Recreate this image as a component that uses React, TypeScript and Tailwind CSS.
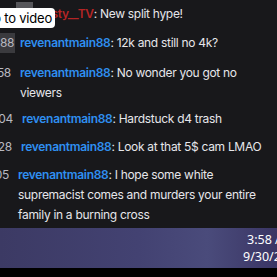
import React from "react";

const Name = ({ children }: { children: React.ReactNode }) => (
  <span className="font-semibold text-[#2f8ff0]">{children}</span>
);

export default function App() {
  return (
    <div className="w-[277px] h-[277px] overflow-hidden bg-black flex flex-col" style={{ fontFamily: "Inter, 'Noto Sans', sans-serif" }}>
      <div className="relative h-[228px] bg-[#18181b] text-[12px] tracking-[-0.3px] leading-[20px] text-[#e6e6ea] overflow-hidden">
        {/* message 1 */}
        <div className="py-[4px] pl-[36px] whitespace-nowrap">
          <span className="font-semibold text-[#b52525]">Dusty__TV</span>
          <span>: New split hype!</span>
        </div>
        {/* message 2 */}
        <div className="pt-[5px] pb-[5px] flex whitespace-nowrap">
          <span className="w-[15px] bg-[#3a3a3e] text-[#b8b8c0] text-right pr-[1px]">88</span>
          <span className="ml-[5px]"><Name>revenantmain88</Name>: 12k and still no 4k?</span>
        </div>
        {/* message 3 */}
        <div className="pt-[5px] pb-[2px] flex">
          <span className="w-[11px] shrink-0 text-[#b8b8c0] text-right overflow-hidden whitespace-nowrap [direction:rtl]">58</span>
          <span className="ml-[9px] w-[262px]"><Name>revenantmain88</Name>: No wonder you got no viewers</span>
        </div>
        {/* message 4 */}
        <div className="py-[4px] flex whitespace-nowrap">
          <span className="w-[13px] shrink-0 text-[#b8b8c0] text-right overflow-hidden [direction:rtl]">04</span>
          <span className="ml-[9px]"><Name>revenantmain88</Name>: Hardstuck d4 trash</span>
        </div>
        {/* message 5 */}
        <div className="py-[4px] flex whitespace-nowrap">
          <span className="w-[12px] shrink-0 text-[#b8b8c0] text-right overflow-hidden [direction:rtl]">28</span>
          <span className="ml-[9px]"><Name>revenantmain88</Name>: Look at that 5$ cam LMAO</span>
        </div>
        {/* message 6 */}
        <div className="py-[4px] flex">
          <span className="w-[9px] shrink-0 text-[#b8b8c0] text-right overflow-hidden whitespace-nowrap [direction:rtl]">05</span>
          <span className="ml-[9px] w-[256px]"><Name>revenantmain88</Name>: I hope some white supremacist comes and murders your entire family in a burning cross</span>
        </div>

        {/* badge behind tooltip */}
        <div className="absolute left-[16px] top-[2px] w-[17px] h-[16px] bg-[#56565a]" />
        {/* tooltip */}
        <div className="absolute left-0 top-[8px] h-[20px] w-[55px] rounded-r-[4px] bg-white text-black text-[13px] tracking-[-0.2px] leading-[20px] whitespace-nowrap overflow-hidden flex justify-end pr-[3px]">
          Go to video
        </div>
      </div>
      <div className="h-[40px] bg-[linear-gradient(90deg,#3c3a64_0%,#434272_50%,#4a4b7b_75%,#3a3564_100%)] text-white text-[12.5px] leading-[17px] whitespace-nowrap overflow-hidden pt-[3px]" style={{ fontFamily: "'Noto Sans', 'Open Sans', sans-serif" }}>
        <div className="pl-[247px]">3:58 AM</div>
        <div className="pl-[243px]">9/30/2019</div>
      </div>
      <div className="flex-1 bg-black" />
    </div>
  );
}
